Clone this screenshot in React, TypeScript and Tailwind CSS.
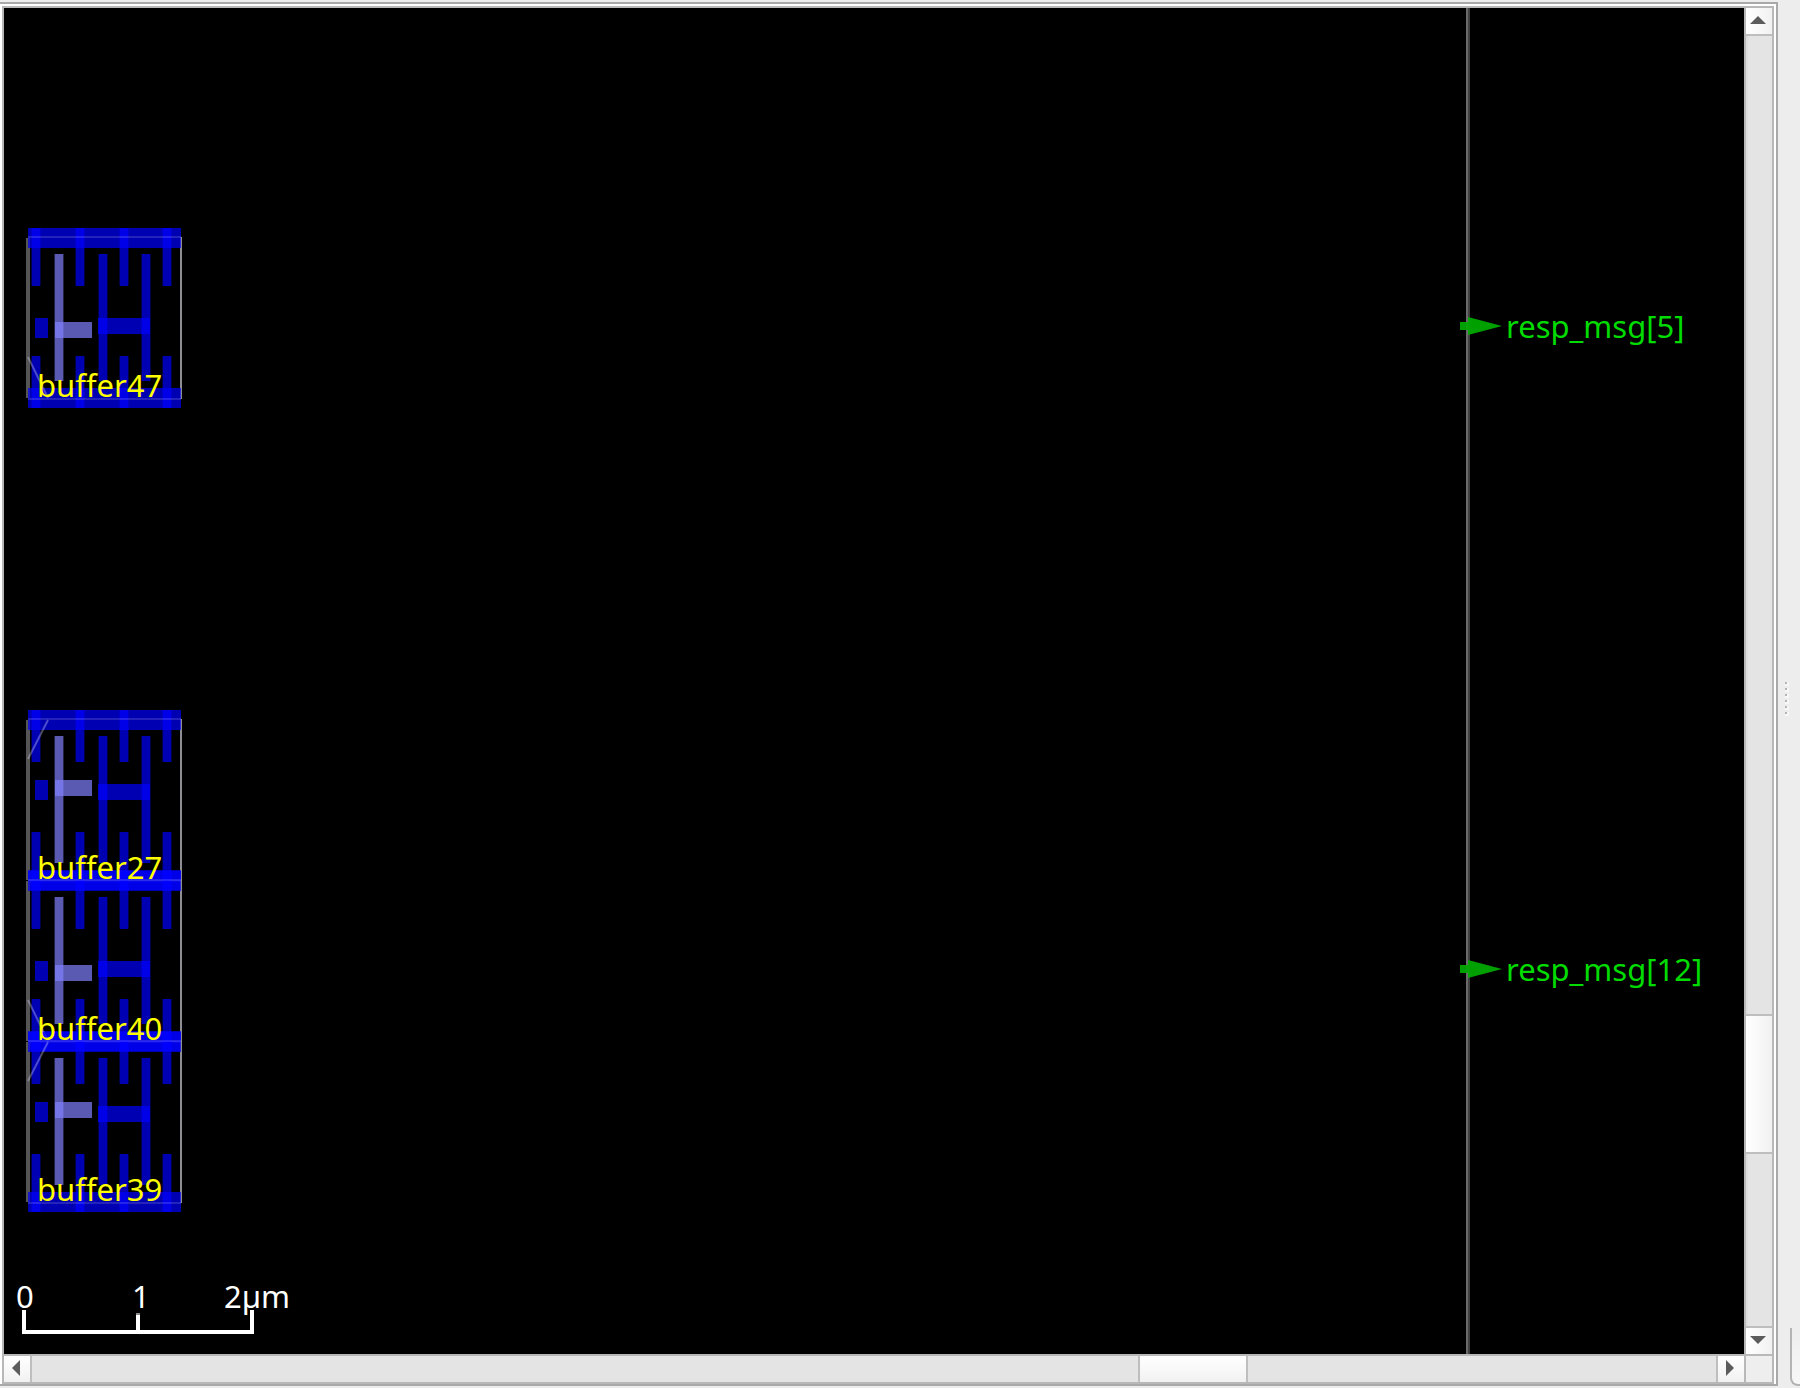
import React from "react";

const RAIL_X = 28;
const RAIL_W = 153;
const FINGERS = [32, 76, 120, 163];

const CELLS = [
  { name: "buffer47", top: 228, flipped: false },
  { name: "buffer27", top: 710, flipped: true },
  { name: "buffer40", top: 871, flipped: false },
  { name: "buffer39", top: 1032, flipped: true },
];

/** Vertical metal strip with faint one-pixel edges. */
function Strip({ x, y, h }: { x: number; y: number; h: number }) {
  return (
    <>
      <rect x={x} y={y} width="8" height={h} />
      <rect x={x - 1} y={y} width="1" height={h} opacity="0.4" />
      <rect x={x + 8} y={y} width="1" height={h} opacity="0.4" />
    </>
  );
}

/** One placed buffer cell: power rails, metal shapes and outline. */
function Cell({ top, flipped }: { top: number; flipped: boolean }) {
  const fingerH = flipped ? 52 : 58;
  const lowerFinger = flipped ? 122 : 128;
  const pinY = flipped ? 70 : 94;
  const barY = flipped ? 74 : 90;
  const stubY = flipped ? 70 : 90;
  return (
    <g transform={`translate(0 ${top})`}>
      <rect x="26" y="10" width="4" height="160" fill="#555555" />
      <rect x="180" y="9" width="2" height="162" fill="#8e8e92" />
      <g fill="#0000ff" fillOpacity="0.7">
        <rect x={RAIL_X} y="0" width={RAIL_W} height="20" />
        <rect x={RAIL_X} y="160" width={RAIL_W} height="20" />
        {FINGERS.map((x) => (
          <React.Fragment key={x}>
            <Strip x={x} y={0} h={fingerH} />
            <Strip x={x} y={lowerFinger} h={180 - lowerFinger} />
          </React.Fragment>
        ))}
        <Strip x={99} y={26} h={127} />
        <Strip x={142} y={26} h={127} />
        <rect x="98" y={barY} width="52" height="16" />
        <rect x="35" y={stubY} width="13" height="20" />
      </g>
      <g fill="#8080ff" fillOpacity="0.7">
        <Strip x={55} y={26} h={127} />
        <rect x="55" y={pinY} width="37" height="16" />
      </g>
      <g fill="#ffffff" fillOpacity="0.14">
        <rect x={RAIL_X} y="8" width={RAIL_W} height="2" />
        <rect x={RAIL_X} y="170" width={RAIL_W} height="2" />
      </g>
      <line
        x1="28"
        y1={flipped ? 49 : 129}
        x2="48"
        y2={flipped ? 10 : 170}
        stroke="#d8d8ff"
        strokeOpacity="0.35"
        strokeWidth="2"
      />
    </g>
  );
}

function Port({ name, y }: { name: string; y: number }) {
  return (
    <g>
      <g fill="#00aa00" fillOpacity="0.94">
        <rect x="1460" y={y - 4} width="8" height="8" />
        <path d={`M1468 ${y - 9}V${y + 9}L1502 ${y}Z`} />
      </g>
      <text x="1506" y={y + 12} fill="#00dc00">
        {name}
      </text>
    </g>
  );
}

function LayoutCanvas() {
  return (
    <div className="relative min-w-0 flex-1 overflow-hidden bg-black">
      <svg
        className="absolute inset-0 h-full w-full font-['Noto_Sans',sans-serif] text-[31px]"
        role="img"
        aria-label="Chip layout"
      >
        <g transform="translate(-4 -8)">
          {CELLS.map((c) => (
            <Cell key={c.name} top={c.top} flipped={c.flipped} />
          ))}
          {CELLS.map((c) => (
            <text key={c.name} x="37" y={c.top + 169} fill="#ffff00">
              {c.name}
            </text>
          ))}
          <rect x="1466" y="8" width="2" height="4000" fill="#6a6a6a" />
          <rect x="1468" y="8" width="2" height="4000" fill="#404040" />
          <Port name="resp_msg[5]" y={326} />
          <Port name="resp_msg[12]" y={969} />
        </g>
      </svg>
      <svg
        className="absolute bottom-5 left-3 font-['Noto_Sans',sans-serif] text-[31px]"
        width="290"
        height="64"
        role="img"
        aria-label="Scale bar"
      >
        <g fill="#ffffff">
          <path d="M6 40h4v20h110v-16h4v16h110v-20h4v24H6z" />
          <rect x="120" y="43" width="4" height="2" fill="#888888" />
          <text x="0" y="38">0</text>
          <text x="116" y="38">1</text>
          <text x="208" y="38">2µm</text>
        </g>
      </svg>
    </div>
  );
}

const ARROWS = {
  up: "M4 16l8-8 8 8z",
  down: "M4 8h16l-8 8z",
  left: "M8 12l8-8v16z",
  right: "M8 4l8 8-8 8z",
};

function ArrowButton({ dir }: { dir: keyof typeof ARROWS }) {
  const vertical = dir === "up" || dir === "down";
  return (
    <button
      type="button"
      aria-label={`Scroll ${dir}`}
      className={
        vertical
          ? "size-[26px] shrink-0 bg-linear-to-r from-white to-[#f1f1f1]"
          : "size-[26px] shrink-0 bg-linear-to-b from-white to-[#f1f1f1]"
      }
    >
      <svg width="26" height="26" viewBox="0 0 26 26">
        <path d={ARROWS[dir]} fill="#5c5c5c" />
      </svg>
    </button>
  );
}

export default function App() {
  return (
    <div className="flex h-screen overflow-hidden bg-[#ededed] py-0.5">
      <main className="flex min-w-0 flex-1 border-y-2 border-r-2 border-[#a9a9a9] bg-white px-0.5 pt-0.5">
        <div className="flex min-w-0 flex-1 flex-col border-2 border-[#b8b8b8]">
          <div className="flex min-h-0 flex-1">
            <LayoutCanvas />
            <div className="flex w-7 flex-col border-l-2 border-[#b8b8b8] bg-[#e4e4e4]">
              <ArrowButton dir="up" />
              <div className="flex flex-1 flex-col border-y-2 border-[#bebebe]">
                <div className="grow-[978] border-l-2 border-[#dddddd]" />
                <div className="grow-[136] border-y-2 border-[#bebebe] bg-linear-to-r from-white to-[#f1f1f1]" />
                <div className="grow-[172] border-l-2 border-[#dddddd]" />
              </div>
              <ArrowButton dir="down" />
            </div>
          </div>
          <div className="flex h-7 border-t-2 border-[#b8b8b8] bg-[#e4e4e4]">
            <ArrowButton dir="left" />
            <div className="flex flex-1 border-x-2 border-[#bebebe]">
              <div className="grow-[1106]" />
              <div className="grow-[106] border-x-2 border-[#bebebe] bg-linear-to-b from-white to-[#f1f1f1]" />
              <div className="grow-[468]" />
            </div>
            <ArrowButton dir="right" />
            <div className="w-7 border-l-2 border-[#b8b8b8] bg-[#eeeeee]" />
          </div>
        </div>
      </main>
      <aside className="flex w-[22px] shrink-0">
        <div className="flex w-3 flex-col items-center justify-center gap-1 pt-2 pl-1">
          {[0, 1, 2, 3, 4, 5].map((i) => (
            <span key={i} className="size-0.5 bg-[#b4b4b4] shadow-[1px_1px_0_1px_#f7f7f7]" />
          ))}
        </div>
        <div className="flex flex-1 items-end">
          <div className="h-[58px] w-full rounded-bl-lg border-b-2 border-l-2 border-[#b4b4b4] bg-linear-to-b from-[#ededed] to-[#f8f8f8]" />
        </div>
      </aside>
    </div>
  );
}
